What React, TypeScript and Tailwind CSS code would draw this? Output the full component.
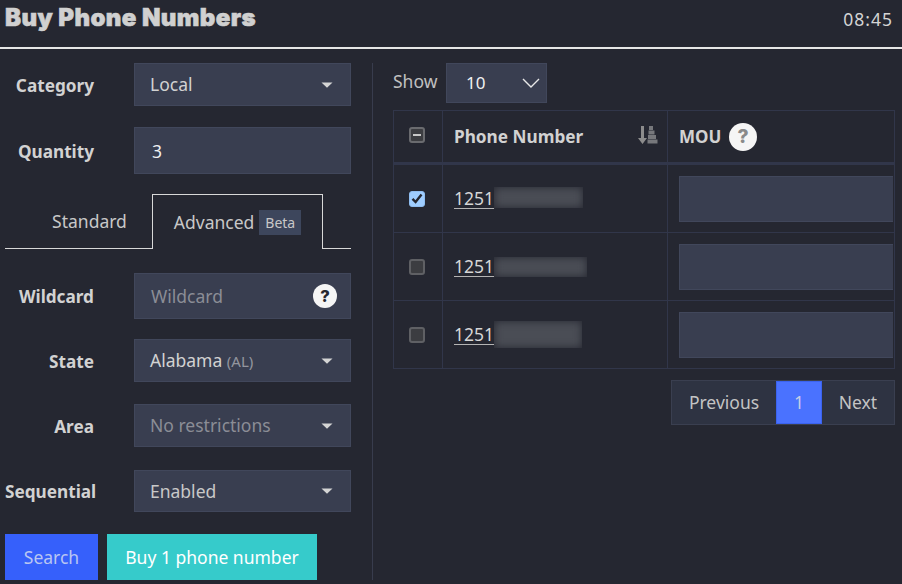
import React from 'react';

const fieldClass = 'h-full w-[217px] shrink-0 bg-[#393e50] border border-[#41475b] flex items-center text-[17.5px]';

const Caret = () => (
  <svg width="12" height="6" viewBox="0 0 12 6" className="ml-auto mr-[17px] shrink-0">
    <path d="M0.5 0.5H11.5L6 5.8Z" fill="#d4d4d4" />
  </svg>
);

const Help: React.FC<{ className?: string; fill?: string }> = ({ className, fill = '#26272f' }) => (
  <svg viewBox="0 0 24 24" className={className}>
    <circle cx="12" cy="12" r="12" fill="#f5f5f5" />
    <text x="12" y="17.5" textAnchor="middle" fontSize="16.5" fontWeight="800" fontFamily="Inter, sans-serif" fill={fill}>?</text>
  </svg>
);

const FormRow: React.FC<{ label: string; h: string; mt: string; children: React.ReactNode }> = ({ label, h, mt, children }) => (
  <div className={`flex items-center ${h} ${mt}`}>
    <div className="w-[89px] shrink-0 text-right font-bold text-[17.2px] text-[#d2d2d2] whitespace-nowrap pt-[2px]">{label}</div>
    <div className="w-[40px] shrink-0" />
    <div className={fieldClass}>{children}</div>
  </div>
);

const PhoneRow: React.FC<{ checked?: boolean; tail: string }> = ({ checked, tail }) => (
  <div className="flex h-[68px] border-b border-[#31364a]">
    <div className="w-[49px] shrink-0 border-r border-[#31364a] pr-[2px] flex items-center justify-center">
      {checked ? (
        <div className="w-[16px] h-[16px] rounded-[3px] bg-[#9fcdff] border border-[#8fbdf0] flex items-center justify-center">
          <svg width="12" height="11" viewBox="0 0 12 11">
            <path d="M1.5 5.8L4.6 9L10.5 1.5" stroke="#24262f" strokeWidth="2.4" fill="none" />
          </svg>
        </div>
      ) : (
        <div className="w-[16px] h-[16px] rounded-[3px] bg-[#3c3d41] border-2 border-[#5f6064]" />
      )}
    </div>
    <div className="w-[225px] shrink-0 border-r border-[#31364a] pl-[11px] flex items-center text-[17.5px] text-[#d6d6d6]">
      <span className="underline underline-offset-[3px] decoration-[#b4b4b4]">1251</span>
      <span className={`${tail} overflow-hidden`}>
        <span className="block h-full w-full bg-[#4a4d55] blur-[4px]" />
      </span>
    </div>
    <div className="flex-1 pl-[11px] flex items-center">
      <div className="h-[46px] w-full mr-[1px] bg-[#393e50] border border-[#41475b] border-r-0" />
    </div>
  </div>
);

export default function App() {
  return (
    <div className="w-[902px] h-[584px] overflow-hidden bg-[#252731] text-[#d2d2d2] font-['Noto_Sans','Roboto',sans-serif]">
      <header className="h-[49px] border-b-2 border-[#e6e6e6] flex items-start justify-between pl-[5px] pr-[9px]">
        <h1 className="text-[24px] leading-[36px] font-black text-[#d0d0d0] font-['Inter',sans-serif] tracking-[0.4px] [-webkit-text-stroke:0.6px_#d0d0d0]">Buy Phone Numbers</h1>
        <span className="text-[17.5px] leading-[38px] tracking-[1px] text-[#d4d4d4]">08:45</span>
      </header>

      <div className="flex pt-[14px]">
        <aside className="w-[373px] h-[517px] shrink-0 border-r border-[#383c4d] pl-[5px] pr-[21px]">
          <FormRow label="Category" h="h-[43px]" mt="mt-0">
            <span className="pl-[15px] text-[#d2d2d2]">Local</span>
            <Caret />
          </FormRow>
          <FormRow label="Quantity" h="h-[47px]" mt="mt-[21px]">
            <span className="pl-[17px] pt-[2px] text-[#f0f0f0]">3</span>
          </FormRow>

          <div className="flex h-[55px] mt-[20px]">
            <div className="w-[147px] border-b border-[#d8d8d8] flex items-center justify-center pl-[22px] text-[17.5px] text-[#c8c8c8]">Standard</div>
            <div className="w-[171px] border border-b-0 border-[#d8d8d8] flex items-center justify-center gap-[5px] text-[17.5px] text-[#c8c8c8]">
              <span>Advanced</span>
              <span className="bg-[#3d465c] px-[6px] h-[25px] leading-[25px] text-[14px] text-[#c8c8c8]">Beta</span>
            </div>
            <div className="flex-1 border-b border-[#d8d8d8]" />
          </div>

          <FormRow label="Wildcard" h="h-[46px]" mt="mt-[24px]">
            <span className="pl-[16px] text-[#8b8d96]">Wildcard</span>
            <Help className="ml-auto mr-[13px] w-[24px] h-[24px]" />
          </FormRow>
          <FormRow label="State" h="h-[43px]" mt="mt-[20px]">
            <span className="pl-[15px] text-[#d2d2d2]">Alabama <span className="text-[15px] text-[#93959e]">(AL)</span></span>
            <Caret />
          </FormRow>
          <FormRow label="Area" h="h-[43px]" mt="mt-[22px]">
            <span className="pl-[15px] text-[#8b8d96]">No restrictions</span>
            <Caret />
          </FormRow>
          <FormRow label="Sequential" h="h-[42px]" mt="mt-[23px]">
            <span className="pl-[15px] text-[#c8c8c8]">Enabled</span>
            <Caret />
          </FormRow>

          <div className="flex gap-[9px] mt-[22px] text-[17.5px]">
            <button className="w-[93px] h-[46px] bg-[#3660fb] text-[#b9c6f2]">Search</button>
            <button className="w-[210px] h-[46px] bg-[#36cbcb] text-white">Buy 1 phone number</button>
          </div>
        </aside>

        <main className="flex-1 pl-[20px] pr-[7px]">
          <div className="flex items-center h-[40px]">
            <span className="w-[53px] text-[17.5px] text-[#c0c0c0] -mt-[4px]">Show</span>
            <div className="w-[101px] h-full bg-[#393e50] border border-[#41475b] flex items-center pl-[19px] text-[17px] text-[#f0f0f0]">
              10
              <svg width="18" height="10" viewBox="0 0 18 10" className="ml-auto mr-[6px]">
                <path d="M1 1L9 9L17 1" stroke="#e8e8e8" strokeWidth="1.4" fill="none" />
              </svg>
            </div>
          </div>

          <div className="mt-[7px] border border-[#31364a] border-b-0">
            <div className="flex h-[54px] border-b-[3px] border-[#31364a]">
              <div className="w-[49px] shrink-0 border-r border-[#31364a] pr-[2px] flex items-center justify-center pb-[4px]">
                <div className="w-[16px] h-[16px] rounded-[3px] bg-[#3c3d41] border-2 border-[#6a6b6f] flex items-center justify-center">
                  <div className="w-[8px] h-[2px] bg-[#c8c8c8]" />
                </div>
              </div>
              <div className="w-[225px] shrink-0 border-r border-[#31364a] pl-[11px] pr-[9px] flex items-center font-bold text-[17.2px] text-[#d2d2d2]">
                Phone Number
                <svg width="20" height="20" viewBox="0 0 20 20" className="ml-auto -mt-[3px]">
                  <path d="M3 1h3v12h3l-4.500 6L0 13h3z" fill="#8c8c8c" />
                  <path d="M11 1h4v4h-4zM10.500 5.500h6v4h-6zM10 10h8v4h-8zM9.500 14.500h10v4h-10z" fill="#77787c" />
                </svg>
              </div>
              <div className="flex-1 pl-[11px] flex items-center gap-[8px] font-bold text-[17px] text-[#d2d2d2]">
                MOU
                <Help className="w-[28px] h-[28px]" fill="#8a8a8a" />
              </div>
            </div>
            <PhoneRow checked tail="w-[89px] h-[21px] -mt-[2px]" />
            <PhoneRow tail="w-[93px] h-[20px]" />
            <PhoneRow tail="w-[88px] h-[27px]" />
          </div>

          <div className="flex justify-end mt-[11px]">
            <div className="flex h-[45px] text-[17.5px] bg-[#2e3342] border border-[#3a3f50]">
              <div className="w-[104px] flex items-center justify-center text-[#c4c4c4]">Previous</div>
              <div className="w-[46px] flex items-center justify-center bg-[#4a72ff] border border-[#3b63ef] text-[#c4cde8]">1</div>
              <div className="w-[72px] flex items-center justify-center text-[#c4c4c4]">Next</div>
            </div>
          </div>
        </main>
      </div>
    </div>
  );
}
